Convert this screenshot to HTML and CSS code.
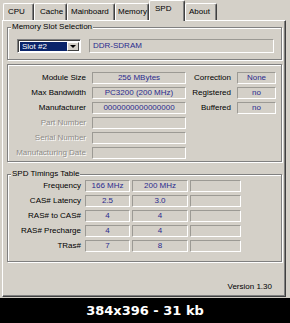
FILE: index.html
```html
<!DOCTYPE html>
<html lang="en">
<head>
    <meta charset="UTF-8">
    <meta name="viewport" content="width=device-width, initial-scale=1.0">
    <title>CPU-Z - SPD</title>
    <link rel="stylesheet" href="styles.css">
</head>
<body>
    <div class="window">
        <div class="tabs">
            <div class="tab tab-cpu">CPU</div>
            <div class="tab tab-cache">Cache</div>
            <div class="tab tab-mainboard">Mainboard</div>
            <div class="tab tab-memory">Memory</div>
            <div class="tab tab-spd active">SPD</div>
            <div class="tab tab-about">About</div>
        </div>

        <div class="panel">
            <div class="group slot-group">
                <div class="group-title">Memory Slot Selection</div>
                <div class="slot-row">
                    <div class="combo">
                        <span class="combo-text">Slot #2</span>
                        <span class="combo-button"><span class="arrow"></span></span>
                    </div>
                    <div class="field type-field">DDR-SDRAM</div>
                </div>
            </div>

            <div class="group module-group">
                <div class="module-left">
                    <div class="label">Module Size</div>
                    <div class="field">256 MBytes</div>
                    <div class="label">Max Bandwidth</div>
                    <div class="field">PC3200 (200 MHz)</div>
                    <div class="label">Manufacturer</div>
                    <div class="field">0000000000000000</div>
                    <div class="label disabled">Part Number</div>
                    <div class="field"></div>
                    <div class="label disabled">Serial Number</div>
                    <div class="field"></div>
                    <div class="label disabled">Manufacturing Date</div>
                    <div class="field"></div>
                </div>
                <div class="module-right">
                    <div class="label">Correction</div>
                    <div class="field">None</div>
                    <div class="label">Registered</div>
                    <div class="field">no</div>
                    <div class="label">Buffered</div>
                    <div class="field">no</div>
                </div>
            </div>

            <div class="group timings-group">
                <div class="group-title">SPD Timings Table</div>
                <div class="timings">
                    <div class="label">Frequency</div>
                    <div class="field">166 MHz</div>
                    <div class="field">200 MHz</div>
                    <div class="field"></div>

                    <div class="label">CAS# Latency</div>
                    <div class="field">2.5</div>
                    <div class="field">3.0</div>
                    <div class="field"></div>

                    <div class="label">RAS# to CAS#</div>
                    <div class="field">4</div>
                    <div class="field">4</div>
                    <div class="field"></div>

                    <div class="label">RAS# Precharge</div>
                    <div class="field">4</div>
                    <div class="field">4</div>
                    <div class="field"></div>

                    <div class="label">TRas#</div>
                    <div class="field">7</div>
                    <div class="field">8</div>
                    <div class="field"></div>
                </div>
            </div>

            <div class="version">Version 1.30</div>
        </div>
    </div>

    <div class="caption">384x396 - 31 kb</div>
</body>
</html>
```

FILE: styles.css
```css
body {
    margin: 0;
    padding: 0;
    width: 290px;
    background: #000;
    font-family: "Liberation Sans", Arial, sans-serif;
    font-size: 8px;
    color: #000;
}

.window {
    height: 298px;
    background: #d4d0c8;
    overflow: hidden;
}

/* tab strip */
.tabs {
    display: flex;
    align-items: flex-end;
    height: 20px;
    padding-left: 3px;
}

.tab {
    box-sizing: border-box;
    height: 17px;
    line-height: 15px;
    padding-left: 4px;
    border-top: 1px solid #fff;
    border-left: 1px solid #fff;
    border-right: 1px solid #404040;
    border-radius: 2px 2px 0 0;
    box-shadow: inset -1px 0 0 #808080;
    white-space: nowrap;
}

.tab-cpu { width: 31px; }
.tab-cache { width: 33px; padding-left: 5px; }
.tab-mainboard { width: 48px; padding-left: 3px; }
.tab-memory { width: 34px; padding-left: 2px; }
.tab-spd { width: 36px; }
.tab-about { width: 32px; padding-left: 3px; }

.tab.active {
    position: relative;
    z-index: 1;
    height: 21px;
    line-height: 15px;
    margin-bottom: -1px;
    padding-left: 5px;
    background: #d4d0c8;
}

/* page of the tab control */
.panel {
    box-sizing: border-box;
    width: 284px;
    height: 277px;
    margin-left: 2px;
    padding: 6px 3px 0 4px;
    border-top: 1px solid #fff;
    border-left: 1px solid #fff;
    border-right: 1px solid #404040;
    border-bottom: 1px solid #404040;
    box-shadow: inset -1px -1px 0 #808080;
}

.group {
    border: 1px solid #808080;
    box-shadow: inset 1px 1px 0 #fff, 1px 1px 0 #fff;
}

.group-title {
    width: fit-content;
    height: 10px;
    line-height: 10px;
    margin: -6px 0 0 3px;
    padding: 0 1px;
    background: #d4d0c8;
}

.field {
    box-sizing: border-box;
    height: 12px;
    line-height: 10px;
    border: 1px solid;
    border-color: #9c9a94 #fff #fff #9c9a94;
    color: #2a2a8e;
    text-align: center;
    white-space: nowrap;
    overflow: hidden;
}

.label {
    height: 12px;
    line-height: 12px;
    text-align: right;
    white-space: nowrap;
}

.label.disabled {
    color: #8e8c88;
    text-shadow: 1px 1px 0 #fff;
}

/* memory slot selection */
.slot-group {
    height: 31px;
}

.slot-row {
    display: flex;
    gap: 8px;
    margin: 7px 7px 0 9px;
}

.combo {
    box-sizing: border-box;
    display: flex;
    width: 64px;
    height: 14px;
    padding: 1px;
    border: 1px solid;
    border-color: #808080 #fff #fff #808080;
    box-shadow: inset 1px 1px 0 #404040;
    background: #fff;
}

.combo-text {
    flex: 1;
    margin: 1px 0 0 1px;
    padding-left: 2px;
    line-height: 10px;
    background: #0a246a;
    color: #fff;
}

.combo-button {
    box-sizing: border-box;
    display: flex;
    align-items: center;
    justify-content: center;
    width: 12px;
    margin-top: 1px;
    background: #d4d0c8;
    border: 1px solid;
    border-color: #fff #404040 #404040 #fff;
}

.arrow {
    width: 0;
    height: 0;
    border-left: 3px solid transparent;
    border-right: 3px solid transparent;
    border-top: 3px solid #000;
}

.type-field {
    flex: 1;
    height: 14px;
    line-height: 12px;
    padding-left: 3px;
    text-align: left;
}

/* module information */
.module-group {
    display: flex;
    gap: 3px;
    height: 89px;
    margin-top: 4px;
    padding-top: 7px;
}

.module-left {
    display: grid;
    grid-template-columns: 78px 94px;
    column-gap: 6px;
    row-gap: 3px;
    align-content: start;
}

.module-right {
    display: grid;
    grid-template-columns: 42px 39px;
    column-gap: 6px;
    row-gap: 3px;
    align-content: start;
}

/* SPD timings */
.timings-group {
    height: 86px;
    margin-top: 12px;
}

.timings {
    display: grid;
    grid-template-columns: 74px 45px 56px 51px;
    column-gap: 2px;
    row-gap: 3px;
    margin-top: 1px;
    padding-left: 1px;
}

.timings .label {
    padding-right: 2px;
}

.version {
    margin-top: 20px;
    padding-right: 10px;
    text-align: right;
    line-height: 10px;
}

.caption {
    height: 25px;
    line-height: 25px;
    text-align: center;
    color: #fff;
    font-family: "DejaVu Sans", Verdana, sans-serif;
    font-size: 13px;
    font-weight: bold;
}
```
